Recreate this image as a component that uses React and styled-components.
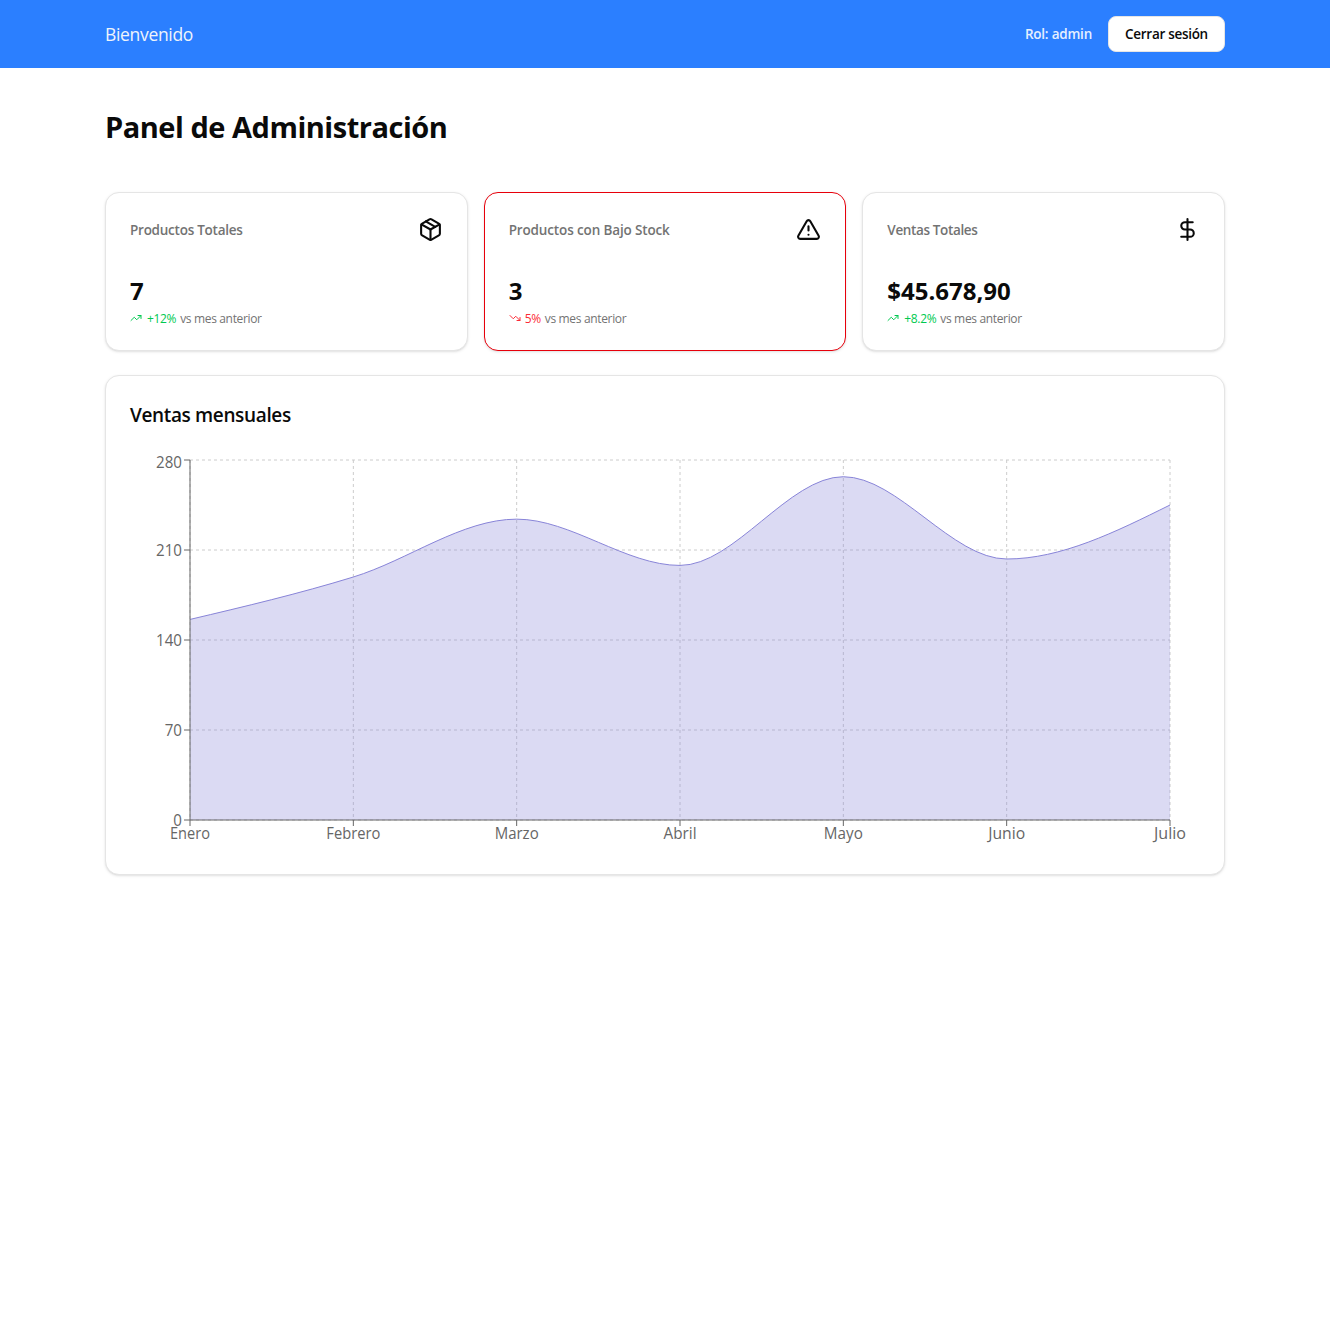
import React from "react";
import styled, { createGlobalStyle } from "styled-components";
import { Package, TriangleAlert, DollarSign, TrendingUp, TrendingDown } from "lucide-react";

const GlobalStyle = createGlobalStyle`
  *, *::before, *::after { box-sizing: border-box; }
  body {
    margin: 0;
    background: #fff;
    color: #0a0a0a;
    font-family: "Open Sans", "Noto Sans", sans-serif;
    font-size: 16px;
    line-height: 24px;
  }
  h1, h2, h3, p { margin: 0; }
`;

const Header = styled.header`
  background: #2b7fff;
  padding: 16px 105px;
  height: 68px;
  display: flex;
  align-items: center;
  justify-content: space-between;
`;

const Welcome = styled.span`
  color: #eff4fb;
  font-size: 17.5px;
  line-height: 28px;
  letter-spacing: -0.32px;
`;

const HeaderActions = styled.div`
  display: flex;
  align-items: center;
  gap: 16px;
`;

const Role = styled.span`
  color: #e5efff;
  font-size: 13.5px;
  line-height: 20px;
  font-weight: 600;
  letter-spacing: -0.22px;
`;

const LogoutButton = styled.button`
  width: 117px;
  height: 36px;
  padding: 0;
  border: 1px solid #e5e5e5;
  border-radius: 8px;
  background: #fff;
  color: #0a0a0a;
  font: 600 13.5px/20px "Open Sans", "Noto Sans", sans-serif;
  letter-spacing: -0.3px;
  white-space: nowrap;
`;

const Main = styled.main`
  padding: 40px 105px;
`;

const Title = styled.h1`
  font-size: 29px;
  line-height: 36px;
  font-weight: 700;
  letter-spacing: -0.48px;
  margin: 1px 0 47px;
`;

const Stats = styled.section`
  display: grid;
  grid-template-columns: repeat(3, 1fr);
  gap: 16px;
  margin-bottom: 24px;
`;

const Card = styled.article`
  border: 1px solid ${(p) => (p.$alert ? "#e7000b" : "#e5e5e5")};
  border-radius: 14px;
  background: #fff;
  box-shadow: 0 1px 3px rgba(0, 0, 0, 0.1), 0 1px 2px -1px rgba(0, 0, 0, 0.1);
  padding: 24px;
`;

const StatCard = styled(Card)`
  height: 159px;
`;

const StatHead = styled.div`
  display: flex;
  align-items: center;
  justify-content: space-between;
  height: 25px;
`;

const StatLabel = styled.h2`
  color: #737373;
  font-size: 13.5px;
  line-height: 20px;
  font-weight: 600;
  letter-spacing: ${(p) => p.$tracking}px;
`;

const StatValue = styled.p`
  margin-top: 33px;
  font-size: 24px;
  line-height: 32px;
  font-weight: 700;
  letter-spacing: 0;
`;

const Trend = styled.p`
  display: flex;
  align-items: center;
  gap: 4px;
  margin-top: 4px;
  height: 16px;
  font-size: 12px;
  line-height: 16px;
  letter-spacing: -0.34px;
  color: #737373;
`;

const Change = styled.span`
  display: inline-flex;
  align-items: center;
  gap: ${(p) => (p.$down ? 4 : 5)}px;
  color: ${(p) => (p.$down ? "#fb2c36" : "#00c950")};

  svg {
    margin-bottom: 2px;
  }
`;

const ChartCard = styled(Card)`
  height: 500px;
`;

const ChartTitle = styled.h2`
  margin-top: 1px;
  font-size: 19px;
  line-height: 28px;
  font-weight: 600;
  letter-spacing: -0.36px;
`;

const Chart = styled.svg`
  display: block;
  margin-top: 21px;
  width: 1070px;
  height: 400px;
  overflow: visible;
`;

const TickLabel = styled.text`
  fill: #666;
  font-family: "Open Sans", "Noto Sans", sans-serif;
  font-size: 15.5px;
  text-anchor: ${(p) => p.$anchor};
`;

const stats = [
  { label: "Productos Totales", value: "7", change: "+12%", Icon: Package, tracking: -0.25 },
  { label: "Productos con Bajo Stock", value: "3", change: "5%", Icon: TriangleAlert, down: true, tracking: -0.14 },
  { label: "Ventas Totales", value: "$45.678,90", change: "+8.2%", Icon: DollarSign, tracking: -0.36 },
];

const sales = [
  ["Enero", 156, 40],
  ["Febrero", 189, 54],
  ["Marzo", 234, 44],
  ["Abril", 198, 33],
  ["Mayo", 267, 39],
  ["Junio", 203, 37],
  ["Julio", 245, 32],
];

const plot = { left: 60, top: 10, width: 980, height: 360, max: 280 };
const bottom = plot.top + plot.height;
const right = plot.left + plot.width;
const points = sales.map(([, v], i) => [
  plot.left + (i * plot.width) / (sales.length - 1),
  bottom - (v / plot.max) * plot.height,
]);

// Monotone cubic interpolation through the sales points.
function monotonePath(pts) {
  const n = pts.length;
  const h = pts[1][0] - pts[0][0];
  const s = pts.slice(1).map((p, i) => (p[1] - pts[i][1]) / h);
  const t = pts.map((_, i) => {
    if (i === 0 || i === n - 1) return 0;
    const a = s[i - 1];
    const b = s[i];
    return (Math.sign(a) + Math.sign(b)) * Math.min(Math.abs(a), Math.abs(b), Math.abs(a + b) / 4);
  });
  t[0] = (3 * s[0] - t[1]) / 2;
  t[n - 1] = (3 * s[n - 2] - t[n - 2]) / 2;
  let d = `M${pts[0][0]},${pts[0][1]}`;
  for (let i = 1; i < n; i++) {
    const [x0, y0] = pts[i - 1];
    const [x1, y1] = pts[i];
    d += `C${x0 + h / 3},${y0 + (t[i - 1] * h) / 3},${x1 - h / 3},${y1 - (t[i] * h) / 3},${x1},${y1}`;
  }
  return d;
}

const curve = monotonePath(points);
const ticks = [0, 70, 140, 210, 280];
const tickY = (v) => bottom - (v / plot.max) * plot.height;

function SalesChart() {
  return (
    <Chart viewBox="0 0 1070 400">
      <g stroke="#ccc" strokeDasharray="3 3">
        {ticks.map((v) => (
          <line key={v} x1={plot.left} x2={right} y1={tickY(v)} y2={tickY(v)} />
        ))}
        {points.map(([x]) => (
          <line key={x} x1={x} x2={x} y1={plot.top} y2={bottom} />
        ))}
      </g>
      <path d={`${curve}L${right},${bottom}L${plot.left},${bottom}Z`} fill="#8884d8" fillOpacity="0.3" />
      <path d={curve} fill="none" stroke="#8884d8" />
      <g stroke="#666">
        <line x1={plot.left} x2={right} y1={bottom} y2={bottom} />
        <line x1={plot.left} x2={plot.left} y1={plot.top} y2={bottom} />
        {points.map(([x]) => (
          <line key={x} x1={x} x2={x} y1={bottom} y2={bottom + 6} />
        ))}
        {ticks.map((v) => (
          <line key={v} x1={plot.left - 6} x2={plot.left} y1={tickY(v)} y2={tickY(v)} />
        ))}
      </g>
      {ticks.map((v) => (
        <TickLabel
          key={v}
          $anchor="end"
          x={plot.left - 8}
          y={tickY(v) + (v === 280 ? 8 : 6)}
          textLength={String(v).length * 8.65}
          lengthAdjust="spacingAndGlyphs"
        >
          {v}
        </TickLabel>
      ))}
      {sales.map(([name, , width], i) => (
        <TickLabel
          key={name}
          $anchor="middle"
          x={points[i][0]}
          y={bottom + 19}
          textLength={width}
          lengthAdjust="spacingAndGlyphs"
        >
          {name}
        </TickLabel>
      ))}
    </Chart>
  );
}

export default function App() {
  return (
    <>
      <GlobalStyle />
      <Header>
        <Welcome>Bienvenido</Welcome>
        <HeaderActions>
          <Role>Rol: admin</Role>
          <LogoutButton>Cerrar sesión</LogoutButton>
        </HeaderActions>
      </Header>
      <Main>
        <Title>Panel de Administración</Title>
        <Stats>
          {stats.map(({ label, value, change, Icon, down, tracking }) => (
            <StatCard key={label} $alert={down}>
              <StatHead>
                <StatLabel $tracking={tracking}>{label}</StatLabel>
                <Icon size={25} />
              </StatHead>
              <StatValue>{value}</StatValue>
              <Trend>
                <Change $down={down}>
                  {down ? <TrendingDown size={12} /> : <TrendingUp size={12} />}
                  {change}
                </Change>
                vs mes anterior
              </Trend>
            </StatCard>
          ))}
        </Stats>
        <ChartCard>
          <ChartTitle>Ventas mensuales</ChartTitle>
          <SalesChart />
        </ChartCard>
      </Main>
    </>
  );
}
